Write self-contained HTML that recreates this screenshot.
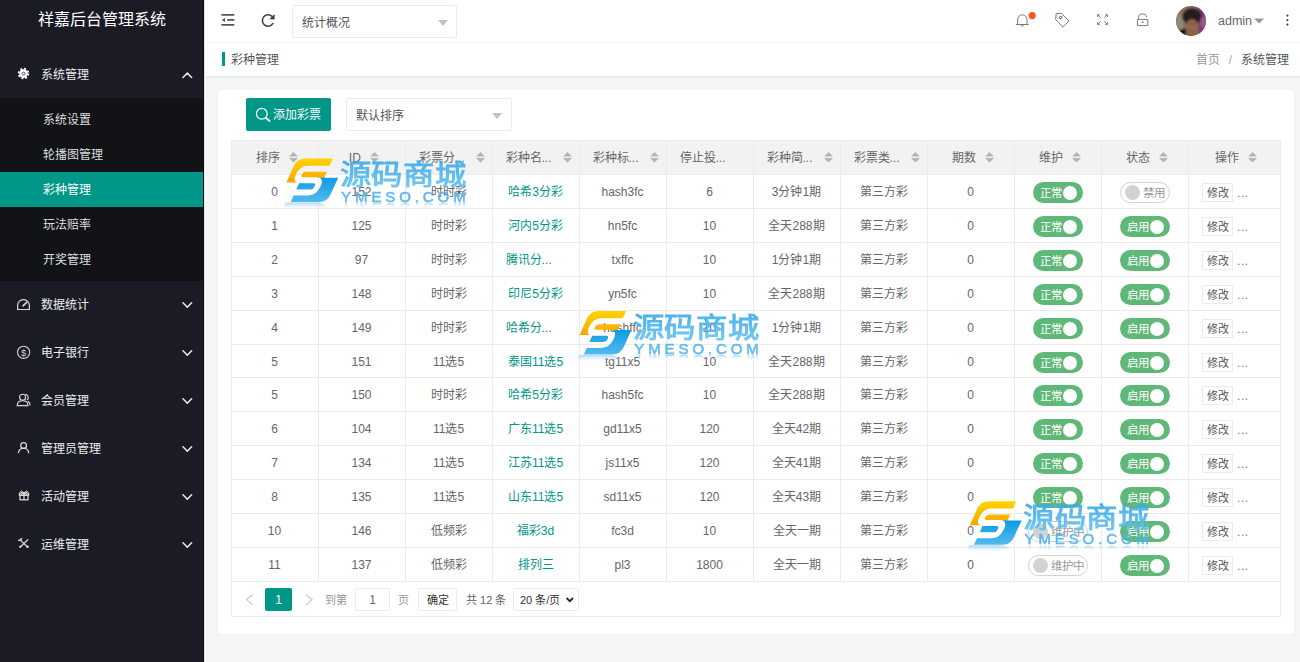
<!DOCTYPE html>
<html lang="zh-CN"><head><meta charset="utf-8">
<style>
*{margin:0;padding:0;box-sizing:border-box}
html,body{width:1300px;height:662px;overflow:hidden;background:#f4f5f7;font-family:"Liberation Sans",sans-serif;font-size:12px;color:#666}
.abs{position:absolute}
svg{position:absolute;overflow:visible}
#side{position:absolute;left:0;top:0;width:204px;height:662px;background:#1b1b25;border-right:1px solid #0b0b12}
#logo{position:absolute;left:0;top:0;width:203px;height:40px;line-height:40px;text-align:center;color:#fff;font-size:16px}
.mi{position:absolute;left:0;width:203px;height:48px;line-height:48px;color:#ebebeb;font-size:12px}
.mi .t{position:absolute;left:41px;top:1px}
.sub{position:absolute;left:0;top:98px;width:203px;height:183px;background:#121317}
.si{position:absolute;left:0;width:203px;height:35px;line-height:35px;color:#ddd;font-size:12px}
.si span{position:absolute;left:43px;top:1px}
.si.on{background:#009688;color:#fff}
#head{position:absolute;left:204px;top:0;width:1096px;height:43px;background:#fff;border-bottom:1px solid #f3f3f3}
#crumb{position:absolute;left:204px;top:43px;width:1096px;height:34px;background:#fff;border-bottom:1px solid #e9eaec;box-shadow:0 1px 1px rgba(0,0,0,0.03)}
#card{position:absolute;left:218px;top:90px;width:1076px;height:544px;background:#fff;border-radius:3px;box-shadow:0 0 1px rgba(0,0,0,0.12)}
.sel{position:absolute;background:#fff;border:1px solid #ebebeb;border-radius:2px;color:#555}
.caret{position:absolute;width:0;height:0;border-left:5px solid transparent;border-right:5px solid transparent;border-top:6px solid #c2c2c2}
#tbl{position:absolute;left:231px;top:140px;width:1050px;height:477px}
.bx{position:absolute;border:1px solid #ebebeb;background:#fff}
.hbg{position:absolute;background:#f2f2f2}
.hl{position:absolute;left:0;width:1050px;height:1px;background:#ebebeb}
.vl{position:absolute;top:0;width:1px;background:#ebebeb}
.th{position:absolute;top:1px;height:33px;line-height:35px;color:#666;font-size:12px;white-space:nowrap}
.thc{position:absolute;top:1px;height:33px;line-height:35px;text-align:center;color:#666;font-size:12px;white-space:nowrap;padding-left:4.6px}
.thc .tx{display:inline-block}
.srt{position:absolute}
.srti{position:relative;display:inline-block;vertical-align:top;margin-left:9px;top:10.7px}
.td{position:absolute;text-align:center;color:#666;font-size:12px;white-space:nowrap}
.td.link{color:#009688}
.sw{position:absolute;height:21px;border-radius:21px;font-size:12px;line-height:21px}
.sw.on{width:49.5px;background:#5fb878;color:#fff}
.sw.on em{position:absolute;left:6.5px;top:1px;font-style:normal;font-size:11.5px}
.sw.on i{position:absolute;right:5.5px;top:3.5px;width:14px;height:14px;border-radius:50%;background:#fff}
.sw.off{width:50px;background:#fff;border:1px solid #d2d2d2;color:#999}
.sw.off.w{width:60px}
.sw.off.w em{left:22px;font-size:11.5px}
.sw.off i{position:absolute;left:4px;top:2px;width:15px;height:15px;border-radius:50%;background:#d2d2d2}
.sw.off em{position:absolute;left:22px;top:0px;font-style:normal;font-size:11.5px}
.edit{position:absolute;width:31px;height:19px;line-height:18px;border:1px solid #ebebeb;background:#fff;color:#555;font-size:11px;text-align:center}
.dots{position:absolute;color:#777;font-size:12px;letter-spacing:0.6px}
.pg{position:absolute;font-size:12px;color:#666;white-space:nowrap}
</style></head><body>
<div id="side">
  <div id="logo">祥嘉后台管理系统</div>
  <div class="mi" style="top:50px"><span class="t">系统管理</span></div>
  <div class="sub">
    <div class="si" style="top:4px"><span>系统设置</span></div>
    <div class="si" style="top:39px"><span>轮播图管理</span></div>
    <div class="si on" style="top:74px"><span>彩种管理</span></div>
    <div class="si" style="top:109px"><span>玩法赔率</span></div>
    <div class="si" style="top:144px"><span>开奖管理</span></div>
  </div>
  <div class="mi" style="top:280px"><span class="t">数据统计</span></div>
  <div class="mi" style="top:328px"><span class="t">电子银行</span></div>
  <div class="mi" style="top:376px"><span class="t">会员管理</span></div>
  <div class="mi" style="top:424px"><span class="t">管理员管理</span></div>
  <div class="mi" style="top:472px"><span class="t">活动管理</span></div>
  <div class="mi" style="top:520px"><span class="t">运维管理</span></div>
  <svg width="204" height="662" style="left:0;top:0">
    <g fill="none" stroke="#e8e8e8" stroke-width="1.6" stroke-linecap="round" stroke-linejoin="round">
      <path d="M183 77.5 L187.3 73 L191.6 77.5"/>
      <path d="M183 302.8 L187.3 307.2 L191.6 302.8"/>
      <path d="M183 350.8 L187.3 355.2 L191.6 350.8"/>
      <path d="M183 398.8 L187.3 403.2 L191.6 398.8"/>
      <path d="M183 446.8 L187.3 451.2 L191.6 446.8"/>
      <path d="M183 494.8 L187.3 499.2 L191.6 494.8"/>
      <path d="M183 542.8 L187.3 547.2 L191.6 542.8"/>
    </g>
    <!-- gear -->
    <g transform="translate(23.5 73.6)">
      <circle r="4.3" fill="#fff"/>
      <circle r="4.9" fill="none" stroke="#fff" stroke-width="1.8" stroke-dasharray="1.92 1.93"/>
      <circle r="1.5" fill="#f4f4f4" stroke="#3a3a48" stroke-width="0.8"/>
    </g>
    <!-- speedometer -->
    <g fill="none" stroke="#d8d8d8" stroke-width="1.2">
      <path d="M17.6 309.5 L17.6 305.5 A5.9 5.9 0 0 1 29.4 305.5 L29.4 309.5 Z"/>
      <path d="M23 305.8 L26.6 302.4" stroke-width="1.6" stroke-linecap="round"/>
    </g>
    <!-- dollar -->
    <g fill="none" stroke="#d0d0d0" stroke-width="1.1">
      <circle cx="23.6" cy="352.3" r="6.1"/>
    </g>
    <text x="23.6" y="355.6" font-size="9.5" font-family="Liberation Sans" text-anchor="middle" fill="#d0d0d0">$</text>
    <!-- users -->
    <g fill="none" stroke="#d8d8d8" stroke-width="1.1">
      <circle cx="22.6" cy="397.2" r="3"/>
      <path d="M17.2 405.6 Q17.2 400.8 22.6 400.8 Q28 400.8 28 405.6 Z"/>
      <path d="M25.3 394.4 A3 3 0 0 1 26.8 400"/>
      <path d="M27.8 401.2 Q30.2 402.4 30.2 405.4"/>
    </g>
    <!-- user -->
    <g fill="none" stroke="#e0e0e0" stroke-width="1.2">
      <circle cx="23.6" cy="445.6" r="2.9"/>
      <path d="M18.4 453.2 A5.2 5 0 0 1 28.8 453.2"/>
    </g>
    <!-- gift -->
    <g fill="none" stroke="#e0e0e0" stroke-width="1.2">
      <rect x="19.4" y="493.2" width="9.2" height="2"/>
      <rect x="20" y="495.2" width="8" height="4.6"/>
      <path d="M24 493.2 L24 499.8"/>
      <path d="M24 493 Q21.2 489.8 20.6 491.6 Q20.6 493 24 493 Q27.4 493 27.4 491.6 Q26.8 489.8 24 493" stroke-width="1"/>
    </g>
    <!-- tools -->
    <g fill="none" stroke="#d8d8d8" stroke-width="1.3" stroke-linecap="round">
      <path d="M20.6 540.4 L27.4 547"/>
      <path d="M27.8 539.6 L20.4 547"/>
      <path d="M18.8 540.2 A2 2 0 0 0 21.4 538.6" stroke-width="1.6"/>
      <circle cx="27.6" cy="546.8" r="1.3" fill="#d8d8d8" stroke="none"/>
      <circle cx="20.2" cy="546.8" r="1.1" fill="#d8d8d8" stroke="none"/>
    </g>
  </svg>
</div>
<div id="head">
  <div class="sel" style="left:88px;top:5px;width:165px;height:33px;line-height:35px;padding-left:9px;font-size:12px">统计概况<i class="caret" style="left:145px;top:14px"></i></div>
</div>
<svg width="1300" height="42" style="left:0;top:0">
  <g fill="none" stroke="#555" stroke-width="1.8">
    <path d="M221.4 14.8 H234.3 M227.2 19.8 H234.3 M221.4 24.8 H234.3"/>
  </g>
  <path d="M221.6 19.9 L225 17.9 L225 21.9 Z" fill="#555"/>
  <g fill="none" stroke="#444" stroke-width="1.6">
    <path d="M273.3 18.2 A5.7 5.7 0 1 0 273.2 23"/>
  </g>
  <path d="M274.6 14 L274.6 19.6 L269.4 19.2 Z" fill="#444"/>
  <g fill="none" stroke="#7a7a7a" stroke-width="1" stroke-linejoin="round">
    <path d="M1017.6 24 L1017.6 20 A4.7 5.2 0 0 1 1027 20 L1027 24 M1015.8 24.5 H1028.8 M1020.6 24.6 L1022.3 26.4 L1024 24.6"/>
    <path d="M1056 16 L1056 13.8 L1061.2 13.2 L1069 21 L1062.8 27 L1055.6 19.6 Z"/>
    <ellipse cx="1060.6" cy="17.4" rx="1.5" ry="1.1" transform="rotate(-20 1060.6 17.4)"/>
    <path d="M1097.6 14.8 L1100.6 17.8 M1097.6 14.8 V17 M1097.6 14.8 H1099.8 M1107.4 14.8 L1104.4 17.8 M1107.4 14.8 V17 M1107.4 14.8 H1105.2 M1097.6 24.4 L1100.6 21.4 M1097.6 24.4 V22.2 M1097.6 24.4 H1099.8 M1107.4 24.4 L1104.4 21.4 M1107.4 24.4 V22.2 M1107.4 24.4 H1105.2"/>
    <rect x="1137.4" y="19.4" width="10.4" height="6.2"/>
    <path d="M1138.6 19.4 L1138.6 17.6 A4 3.4 0 0 1 1146.6 17"/>
  </g>
  <circle cx="1142.6" cy="22.2" r="0.9" fill="#666"/>
  <circle cx="1032.2" cy="15.6" r="3.6" fill="#ff5722"/>
  <path d="M1254 18.6 H1264.2 L1259.1 23.6 Z" fill="#999"/>
  <circle cx="1287.4" cy="15.6" r="1.1" fill="#444"/>
  <circle cx="1287.4" cy="20.1" r="1.1" fill="#444"/>
  <circle cx="1287.4" cy="24.6" r="1.1" fill="#444"/>
</svg>
<svg width="30" height="30" style="left:1176px;top:6px" viewBox="0 0 30 30">
  <defs><clipPath id="av"><circle cx="15" cy="15" r="15"/></clipPath>
  <filter id="bl" x="-20%" y="-20%" width="140%" height="140%"><feGaussianBlur stdDeviation="0.9"/></filter></defs>
  <g clip-path="url(#av)">
   <rect width="30" height="30" fill="#7d7060"/>
   <g filter="url(#bl)">
    <ellipse cx="4" cy="16" rx="4" ry="8" fill="#948a74"/>
    <ellipse cx="7" cy="6" rx="4" ry="3" fill="#9a6a58"/>
    <path d="M21 0 L30 0 L30 30 L23 30 Z" fill="#7f3870"/>
    <ellipse cx="27" cy="16" rx="2.5" ry="6" fill="#9a5a8c"/>
    <ellipse cx="15.8" cy="10.5" rx="9.8" ry="8" fill="#261f1c"/>
    <ellipse cx="16" cy="19.5" rx="5.8" ry="6.2" fill="#94684c"/>
    <ellipse cx="8" cy="28" rx="6" ry="5" fill="#1c1818"/>
    <ellipse cx="15" cy="27" rx="5.5" ry="4.5" fill="#8c6247"/>
    <path d="M11 17.5 L21 17.5" stroke="#5a4a40" stroke-width="0.8"/>
   </g>
  </g>
</svg>
<div class="abs" style="left:1218px;top:13px;line-height:16px;font-size:12.5px;color:#666">admin</div>
<div id="crumb">
  <div class="abs" style="left:18px;top:9px;width:3px;height:14px;background:#009688"></div>
  <div class="abs" style="left:27px;top:0px;line-height:34px;color:#555;font-size:12px">彩种管理</div>
  <div class="abs" style="right:11px;top:0px;line-height:34px;color:#999;font-size:12px">首页<span style="margin:0 9px;color:#aaa">/</span><span style="color:#555">系统管理</span></div>
</div>
<div id="card"></div>
<div class="abs" style="left:204px;top:0;width:1px;height:662px;background:#e4e4e6"></div><div class="abs" style="left:205px;top:0;width:1px;height:662px;background:#fff"></div>
<div class="abs" style="left:246px;top:98px;width:85px;height:33px;background:#009688;border-radius:2px;color:#fff;line-height:35px;font-size:12px;padding-left:27px">添加彩票</div>
<svg width="20" height="20" style="left:0;top:0">
  <g fill="none" stroke="#fff" stroke-width="1.2"><circle cx="261.8" cy="113.8" r="5.4"/><path d="M265.8 117.8 L269.6 121" stroke-width="1.8" stroke-linecap="round"/></g>
</svg>
<div class="sel" style="left:346px;top:98px;width:166px;height:33px;line-height:35px;padding-left:9px;font-size:12px">默认排序<i class="caret" style="left:145px;top:14px"></i></div>
<div id="tbl"><div class="bx" style="left:0;top:0;width:1050px;height:477px"></div><div class="hbg" style="left:1px;top:1px;width:1048px;height:33px"></div><div class="hl" style="top:34px"></div><div class="hl" style="top:68px"></div><div class="hl" style="top:102px"></div><div class="hl" style="top:136px"></div><div class="hl" style="top:170px"></div><div class="hl" style="top:204px"></div><div class="hl" style="top:237px"></div><div class="hl" style="top:271px"></div><div class="hl" style="top:305px"></div><div class="hl" style="top:339px"></div><div class="hl" style="top:373px"></div><div class="hl" style="top:407px"></div><div class="hl" style="top:441px"></div><div class="vl" style="left:87px;height:441px"></div><div class="vl" style="left:174px;height:441px"></div><div class="vl" style="left:261px;height:441px"></div><div class="vl" style="left:348px;height:441px"></div><div class="vl" style="left:435px;height:441px"></div><div class="vl" style="left:522px;height:441px"></div><div class="vl" style="left:609px;height:441px"></div><div class="vl" style="left:696px;height:441px"></div><div class="vl" style="left:783px;height:441px"></div><div class="vl" style="left:870px;height:441px"></div><div class="vl" style="left:957px;height:441px"></div><div class="thc" style="left:0px;width:87px"><span class="tx">排序</span><svg class="srti" width="9" height="11" viewBox="0 0 9 11"><path d="M0 4.6 L4.5 0 L9 4.6 Z M0 5.9 L9 5.9 L4.5 10.5 Z" fill="#b5b5b5"/></svg></div><div class="thc" style="left:87px;width:87px"><span class="tx">ID</span><svg class="srti" width="9" height="11" viewBox="0 0 9 11"><path d="M0 4.6 L4.5 0 L9 4.6 Z M0 5.9 L9 5.9 L4.5 10.5 Z" fill="#b5b5b5"/></svg></div><div class="th" style="left:187.5px">彩票分...</div><svg class="srt" style="left:245px;top:12.2px" width="9" height="11" viewBox="0 0 9 11"><path d="M0 4.6 L4.5 0 L9 4.6 Z M0 5.9 L9 5.9 L4.5 10.5 Z" fill="#b5b5b5"/></svg><div class="th" style="left:274.5px">彩种名...</div><svg class="srt" style="left:332px;top:12.2px" width="9" height="11" viewBox="0 0 9 11"><path d="M0 4.6 L4.5 0 L9 4.6 Z M0 5.9 L9 5.9 L4.5 10.5 Z" fill="#b5b5b5"/></svg><div class="th" style="left:361.5px">彩种标...</div><svg class="srt" style="left:419px;top:12.2px" width="9" height="11" viewBox="0 0 9 11"><path d="M0 4.6 L4.5 0 L9 4.6 Z M0 5.9 L9 5.9 L4.5 10.5 Z" fill="#b5b5b5"/></svg><div class="th" style="left:448.5px">停止投...</div><div class="th" style="left:535.5px">彩种简...</div><svg class="srt" style="left:593px;top:12.2px" width="9" height="11" viewBox="0 0 9 11"><path d="M0 4.6 L4.5 0 L9 4.6 Z M0 5.9 L9 5.9 L4.5 10.5 Z" fill="#b5b5b5"/></svg><div class="th" style="left:622.5px">彩票类...</div><svg class="srt" style="left:680px;top:12.2px" width="9" height="11" viewBox="0 0 9 11"><path d="M0 4.6 L4.5 0 L9 4.6 Z M0 5.9 L9 5.9 L4.5 10.5 Z" fill="#b5b5b5"/></svg><div class="thc" style="left:696px;width:87px"><span class="tx">期数</span><svg class="srti" width="9" height="11" viewBox="0 0 9 11"><path d="M0 4.6 L4.5 0 L9 4.6 Z M0 5.9 L9 5.9 L4.5 10.5 Z" fill="#b5b5b5"/></svg></div><div class="thc" style="left:783px;width:87px"><span class="tx">维护</span><svg class="srti" width="9" height="11" viewBox="0 0 9 11"><path d="M0 4.6 L4.5 0 L9 4.6 Z M0 5.9 L9 5.9 L4.5 10.5 Z" fill="#b5b5b5"/></svg></div><div class="thc" style="left:870px;width:87px"><span class="tx">状态</span><svg class="srti" width="9" height="11" viewBox="0 0 9 11"><path d="M0 4.6 L4.5 0 L9 4.6 Z M0 5.9 L9 5.9 L4.5 10.5 Z" fill="#b5b5b5"/></svg></div><div class="thc" style="left:957px;width:92px"><span class="tx">操作</span><svg class="srti" width="9" height="11" viewBox="0 0 9 11"><path d="M0 4.6 L4.5 0 L9 4.6 Z M0 5.9 L9 5.9 L4.5 10.5 Z" fill="#b5b5b5"/></svg></div><div class="td" style="left:0px;top:36px;width:87px;height:33px;line-height:33px">0</div><div class="td" style="left:87px;top:36px;width:87px;height:33px;line-height:33px">152</div><div class="td" style="left:174px;top:36px;width:87px;height:33px;line-height:33px">时时彩</div><div class="td link" style="left:261px;top:36px;width:87px;height:33px;line-height:33px">哈希3分彩</div><div class="td" style="left:348px;top:36px;width:87px;height:33px;line-height:33px">hash3fc</div><div class="td" style="left:435px;top:36px;width:87px;height:33px;line-height:33px">6</div><div class="td" style="left:522px;top:36px;width:87px;height:33px;line-height:33px">3分钟1期</div><div class="td" style="left:609px;top:36px;width:87px;height:33px;line-height:33px">第三方彩</div><div class="td" style="left:696px;top:36px;width:87px;height:33px;line-height:33px">0</div><div class="sw on" style="left:802px;top:42px"><em>正常</em><i></i></div><div class="sw off" style="left:889px;top:42px"><i></i><em>禁用</em></div><div class="edit" style="left:971px;top:43px">修改</div><div class="dots" style="left:1006px;top:36.5px;height:33px;line-height:33px">...</div><div class="td" style="left:0px;top:70px;width:87px;height:33px;line-height:33px">1</div><div class="td" style="left:87px;top:70px;width:87px;height:33px;line-height:33px">125</div><div class="td" style="left:174px;top:70px;width:87px;height:33px;line-height:33px">时时彩</div><div class="td link" style="left:261px;top:70px;width:87px;height:33px;line-height:33px">河内5分彩</div><div class="td" style="left:348px;top:70px;width:87px;height:33px;line-height:33px">hn5fc</div><div class="td" style="left:435px;top:70px;width:87px;height:33px;line-height:33px">10</div><div class="td" style="left:522px;top:70px;width:87px;height:33px;line-height:33px">全天288期</div><div class="td" style="left:609px;top:70px;width:87px;height:33px;line-height:33px">第三方彩</div><div class="td" style="left:696px;top:70px;width:87px;height:33px;line-height:33px">0</div><div class="sw on" style="left:802px;top:76px"><em>正常</em><i></i></div><div class="sw on" style="left:889px;top:76px"><em>启用</em><i></i></div><div class="edit" style="left:971px;top:77px">修改</div><div class="dots" style="left:1006px;top:70.5px;height:33px;line-height:33px">...</div><div class="td" style="left:0px;top:104px;width:87px;height:33px;line-height:33px">2</div><div class="td" style="left:87px;top:104px;width:87px;height:33px;line-height:33px">97</div><div class="td" style="left:174px;top:104px;width:87px;height:33px;line-height:33px">时时彩</div><div class="td link" style="left:274.5px;top:104px;height:33px;line-height:33px">腾讯分...</div><div class="td" style="left:348px;top:104px;width:87px;height:33px;line-height:33px">txffc</div><div class="td" style="left:435px;top:104px;width:87px;height:33px;line-height:33px">10</div><div class="td" style="left:522px;top:104px;width:87px;height:33px;line-height:33px">1分钟1期</div><div class="td" style="left:609px;top:104px;width:87px;height:33px;line-height:33px">第三方彩</div><div class="td" style="left:696px;top:104px;width:87px;height:33px;line-height:33px">0</div><div class="sw on" style="left:802px;top:110px"><em>正常</em><i></i></div><div class="sw on" style="left:889px;top:110px"><em>启用</em><i></i></div><div class="edit" style="left:971px;top:111px">修改</div><div class="dots" style="left:1006px;top:104.5px;height:33px;line-height:33px">...</div><div class="td" style="left:0px;top:138px;width:87px;height:33px;line-height:33px">3</div><div class="td" style="left:87px;top:138px;width:87px;height:33px;line-height:33px">148</div><div class="td" style="left:174px;top:138px;width:87px;height:33px;line-height:33px">时时彩</div><div class="td link" style="left:261px;top:138px;width:87px;height:33px;line-height:33px">印尼5分彩</div><div class="td" style="left:348px;top:138px;width:87px;height:33px;line-height:33px">yn5fc</div><div class="td" style="left:435px;top:138px;width:87px;height:33px;line-height:33px">10</div><div class="td" style="left:522px;top:138px;width:87px;height:33px;line-height:33px">全天288期</div><div class="td" style="left:609px;top:138px;width:87px;height:33px;line-height:33px">第三方彩</div><div class="td" style="left:696px;top:138px;width:87px;height:33px;line-height:33px">0</div><div class="sw on" style="left:802px;top:144px"><em>正常</em><i></i></div><div class="sw on" style="left:889px;top:144px"><em>启用</em><i></i></div><div class="edit" style="left:971px;top:145px">修改</div><div class="dots" style="left:1006px;top:138.5px;height:33px;line-height:33px">...</div><div class="td" style="left:0px;top:172px;width:87px;height:33px;line-height:33px">4</div><div class="td" style="left:87px;top:172px;width:87px;height:33px;line-height:33px">149</div><div class="td" style="left:174px;top:172px;width:87px;height:33px;line-height:33px">时时彩</div><div class="td link" style="left:274.5px;top:172px;height:33px;line-height:33px">哈希分...</div><div class="td" style="left:348px;top:172px;width:87px;height:33px;line-height:33px">hashffc</div><div class="td" style="left:435px;top:172px;width:87px;height:33px;line-height:33px">10</div><div class="td" style="left:522px;top:172px;width:87px;height:33px;line-height:33px">1分钟1期</div><div class="td" style="left:609px;top:172px;width:87px;height:33px;line-height:33px">第三方彩</div><div class="td" style="left:696px;top:172px;width:87px;height:33px;line-height:33px">0</div><div class="sw on" style="left:802px;top:178px"><em>正常</em><i></i></div><div class="sw on" style="left:889px;top:178px"><em>启用</em><i></i></div><div class="edit" style="left:971px;top:179px">修改</div><div class="dots" style="left:1006px;top:172.5px;height:33px;line-height:33px">...</div><div class="td" style="left:0px;top:206px;width:87px;height:32px;line-height:32px">5</div><div class="td" style="left:87px;top:206px;width:87px;height:32px;line-height:32px">151</div><div class="td" style="left:174px;top:206px;width:87px;height:32px;line-height:32px">11选5</div><div class="td link" style="left:261px;top:206px;width:87px;height:32px;line-height:32px">泰国11选5</div><div class="td" style="left:348px;top:206px;width:87px;height:32px;line-height:32px">tg11x5</div><div class="td" style="left:435px;top:206px;width:87px;height:32px;line-height:32px">10</div><div class="td" style="left:522px;top:206px;width:87px;height:32px;line-height:32px">全天288期</div><div class="td" style="left:609px;top:206px;width:87px;height:32px;line-height:32px">第三方彩</div><div class="td" style="left:696px;top:206px;width:87px;height:32px;line-height:32px">0</div><div class="sw on" style="left:802px;top:212px"><em>正常</em><i></i></div><div class="sw on" style="left:889px;top:212px"><em>启用</em><i></i></div><div class="edit" style="left:971px;top:213px">修改</div><div class="dots" style="left:1006px;top:206.5px;height:32px;line-height:32px">...</div><div class="td" style="left:0px;top:239px;width:87px;height:33px;line-height:33px">5</div><div class="td" style="left:87px;top:239px;width:87px;height:33px;line-height:33px">150</div><div class="td" style="left:174px;top:239px;width:87px;height:33px;line-height:33px">时时彩</div><div class="td link" style="left:261px;top:239px;width:87px;height:33px;line-height:33px">哈希5分彩</div><div class="td" style="left:348px;top:239px;width:87px;height:33px;line-height:33px">hash5fc</div><div class="td" style="left:435px;top:239px;width:87px;height:33px;line-height:33px">10</div><div class="td" style="left:522px;top:239px;width:87px;height:33px;line-height:33px">全天288期</div><div class="td" style="left:609px;top:239px;width:87px;height:33px;line-height:33px">第三方彩</div><div class="td" style="left:696px;top:239px;width:87px;height:33px;line-height:33px">0</div><div class="sw on" style="left:802px;top:245px"><em>正常</em><i></i></div><div class="sw on" style="left:889px;top:245px"><em>启用</em><i></i></div><div class="edit" style="left:971px;top:246px">修改</div><div class="dots" style="left:1006px;top:239.5px;height:33px;line-height:33px">...</div><div class="td" style="left:0px;top:273px;width:87px;height:33px;line-height:33px">6</div><div class="td" style="left:87px;top:273px;width:87px;height:33px;line-height:33px">104</div><div class="td" style="left:174px;top:273px;width:87px;height:33px;line-height:33px">11选5</div><div class="td link" style="left:261px;top:273px;width:87px;height:33px;line-height:33px">广东11选5</div><div class="td" style="left:348px;top:273px;width:87px;height:33px;line-height:33px">gd11x5</div><div class="td" style="left:435px;top:273px;width:87px;height:33px;line-height:33px">120</div><div class="td" style="left:522px;top:273px;width:87px;height:33px;line-height:33px">全天42期</div><div class="td" style="left:609px;top:273px;width:87px;height:33px;line-height:33px">第三方彩</div><div class="td" style="left:696px;top:273px;width:87px;height:33px;line-height:33px">0</div><div class="sw on" style="left:802px;top:279px"><em>正常</em><i></i></div><div class="sw on" style="left:889px;top:279px"><em>启用</em><i></i></div><div class="edit" style="left:971px;top:280px">修改</div><div class="dots" style="left:1006px;top:273.5px;height:33px;line-height:33px">...</div><div class="td" style="left:0px;top:307px;width:87px;height:33px;line-height:33px">7</div><div class="td" style="left:87px;top:307px;width:87px;height:33px;line-height:33px">134</div><div class="td" style="left:174px;top:307px;width:87px;height:33px;line-height:33px">11选5</div><div class="td link" style="left:261px;top:307px;width:87px;height:33px;line-height:33px">江苏11选5</div><div class="td" style="left:348px;top:307px;width:87px;height:33px;line-height:33px">js11x5</div><div class="td" style="left:435px;top:307px;width:87px;height:33px;line-height:33px">120</div><div class="td" style="left:522px;top:307px;width:87px;height:33px;line-height:33px">全天41期</div><div class="td" style="left:609px;top:307px;width:87px;height:33px;line-height:33px">第三方彩</div><div class="td" style="left:696px;top:307px;width:87px;height:33px;line-height:33px">0</div><div class="sw on" style="left:802px;top:313px"><em>正常</em><i></i></div><div class="sw on" style="left:889px;top:313px"><em>启用</em><i></i></div><div class="edit" style="left:971px;top:314px">修改</div><div class="dots" style="left:1006px;top:307.5px;height:33px;line-height:33px">...</div><div class="td" style="left:0px;top:341px;width:87px;height:33px;line-height:33px">8</div><div class="td" style="left:87px;top:341px;width:87px;height:33px;line-height:33px">135</div><div class="td" style="left:174px;top:341px;width:87px;height:33px;line-height:33px">11选5</div><div class="td link" style="left:261px;top:341px;width:87px;height:33px;line-height:33px">山东11选5</div><div class="td" style="left:348px;top:341px;width:87px;height:33px;line-height:33px">sd11x5</div><div class="td" style="left:435px;top:341px;width:87px;height:33px;line-height:33px">120</div><div class="td" style="left:522px;top:341px;width:87px;height:33px;line-height:33px">全天43期</div><div class="td" style="left:609px;top:341px;width:87px;height:33px;line-height:33px">第三方彩</div><div class="td" style="left:696px;top:341px;width:87px;height:33px;line-height:33px">0</div><div class="sw on" style="left:802px;top:347px"><em>正常</em><i></i></div><div class="sw on" style="left:889px;top:347px"><em>启用</em><i></i></div><div class="edit" style="left:971px;top:348px">修改</div><div class="dots" style="left:1006px;top:341.5px;height:33px;line-height:33px">...</div><div class="td" style="left:0px;top:375px;width:87px;height:33px;line-height:33px">10</div><div class="td" style="left:87px;top:375px;width:87px;height:33px;line-height:33px">146</div><div class="td" style="left:174px;top:375px;width:87px;height:33px;line-height:33px">低频彩</div><div class="td link" style="left:261px;top:375px;width:87px;height:33px;line-height:33px">福彩3d</div><div class="td" style="left:348px;top:375px;width:87px;height:33px;line-height:33px">fc3d</div><div class="td" style="left:435px;top:375px;width:87px;height:33px;line-height:33px">10</div><div class="td" style="left:522px;top:375px;width:87px;height:33px;line-height:33px">全天一期</div><div class="td" style="left:609px;top:375px;width:87px;height:33px;line-height:33px">第三方彩</div><div class="td" style="left:696px;top:375px;width:87px;height:33px;line-height:33px">0</div><div class="sw off w" style="left:797px;top:381px"><i></i><em>维护中</em></div><div class="sw on" style="left:889px;top:381px"><em>启用</em><i></i></div><div class="edit" style="left:971px;top:382px">修改</div><div class="dots" style="left:1006px;top:375.5px;height:33px;line-height:33px">...</div><div class="td" style="left:0px;top:409px;width:87px;height:33px;line-height:33px">11</div><div class="td" style="left:87px;top:409px;width:87px;height:33px;line-height:33px">137</div><div class="td" style="left:174px;top:409px;width:87px;height:33px;line-height:33px">低频彩</div><div class="td link" style="left:261px;top:409px;width:87px;height:33px;line-height:33px">排列三</div><div class="td" style="left:348px;top:409px;width:87px;height:33px;line-height:33px">pl3</div><div class="td" style="left:435px;top:409px;width:87px;height:33px;line-height:33px">1800</div><div class="td" style="left:522px;top:409px;width:87px;height:33px;line-height:33px">全天一期</div><div class="td" style="left:609px;top:409px;width:87px;height:33px;line-height:33px">第三方彩</div><div class="td" style="left:696px;top:409px;width:87px;height:33px;line-height:33px">0</div><div class="sw off w" style="left:797px;top:415px"><i></i><em>维护中</em></div><div class="sw on" style="left:889px;top:415px"><em>启用</em><i></i></div><div class="edit" style="left:971px;top:416px">修改</div><div class="dots" style="left:1006px;top:409.5px;height:33px;line-height:33px">...</div></div>
<div class="pg" style="left:0;top:0">
 <svg width="10" height="10" style="left:0;top:0"><g fill="none" stroke="#c2c2c2" stroke-width="1.1"><path d="M252.6 594.6 L246.6 599.6 L252.6 604.8"/><path d="M306 594.6 L312 599.6 L306 604.8"/></g></svg>
 <div class="abs" style="left:265px;top:588px;width:27px;height:23px;background:#009688;border-radius:2px;color:#fff;text-align:center;line-height:25px">1</div>
 <div class="abs" style="left:325px;top:589px;line-height:23px;color:#999;font-size:11px">到第</div>
 <div class="abs" style="left:355px;top:588px;width:35px;height:23px;border:1px solid #ebebeb;border-radius:2px;text-align:center;line-height:23px;color:#666">1</div>
 <div class="abs" style="left:398px;top:589px;line-height:23px;color:#999;font-size:11px">页</div>
 <div class="abs" style="left:418px;top:588px;width:39px;height:23px;border:1px solid #ebebeb;border-radius:2px;text-align:center;line-height:23px;color:#333;font-size:11px">确定</div>
 <div class="abs" style="left:466px;top:589px;line-height:23px;color:#666;font-size:11px">共 12 条</div>
 <div class="abs" style="left:513px;top:588px;width:66px;height:23px;border:1px solid #ebebeb;border-radius:2px;line-height:22px;color:#333;padding-left:6px;font-size:11px">20 条/页</div>
 <svg width="10" height="10" style="left:0;top:0"><path d="M566.6 598 L569.8 601.2 L573 598" fill="none" stroke="#222" stroke-width="1.8"/></svg>
</div>
<svg width="0" height="0" style="left:0;top:0">
 <defs>
  <linearGradient id="gy" x1="0" y1="0" x2="0" y2="1"><stop offset="0" stop-color="#ffd400"/><stop offset="1" stop-color="#f6a500"/></linearGradient>
  <linearGradient id="gb" x1="0" y1="0" x2="0" y2="1"><stop offset="0" stop-color="#0c9ce2"/><stop offset="1" stop-color="#55b9ee"/></linearGradient>
  <linearGradient id="gr" gradientUnits="userSpaceOnUse" x1="0" y1="52" x2="0" y2="59"><stop offset="0" stop-color="#7cc8f2" stop-opacity="0.75"/><stop offset="1" stop-color="#cfeafa" stop-opacity="0"/></linearGradient>
  <linearGradient id="gr2" gradientUnits="userSpaceOnUse" x1="0" y1="-51" x2="0" y2="-58"><stop offset="0" stop-color="#6cc0f0" stop-opacity="0.9"/><stop offset="1" stop-color="#cfeafa" stop-opacity="0"/></linearGradient>
  <linearGradient id="gt" gradientUnits="userSpaceOnUse" x1="0" y1="-25" x2="0" y2="2"><stop offset="0" stop-color="#38a9e8"/><stop offset="1" stop-color="#66c2f0"/></linearGradient>
  <clipPath id="cs"><path d="M-2.4 32.6 L-2.4 16.6 Q-2.4 8.6 5.6 8.6 L33.3 8.6 L33.3 27.7 L47.2 27.7 L47.2 44.1 Q47.2 52.1 39.2 52.1 L10.6 52.1 L10.6 32.6 Z"/></clipPath>
  <mask id="ms" maskUnits="userSpaceOnUse" x="-20" y="0" width="100" height="60"><rect x="-20" y="0" width="100" height="60" fill="#fff"/><path d="M45 18.85 L12 18.85 Q6.45 18.85 6.45 24.6 Q6.45 30.35 12 30.35 L25 30.35 Q30.5 30.35 30.5 36.5 Q30.5 42.6 25 42.6 L-5 42.6" fill="none" stroke="#000" stroke-width="6"/></mask>
  <clipPath id="cr"><rect x="-10" y="51.6" width="220" height="8"/></clipPath>
 </defs>
</svg>
<svg width="1300" height="662" style="left:0;top:0">
 <g transform="translate(280 150)">
   <g transform="matrix(1 0 -0.45 1 23.45 0)" mask="url(#ms)">
    <path d="M-2.4 32.6 L-2.4 16.6 Q-2.4 8.6 5.6 8.6 L33.3 8.6 L33.3 32.6 Z" fill="url(#gy)"/>
    <path d="M10.6 27.7 L47.2 27.7 L47.2 44.1 Q47.2 52.1 39.2 52.1 L10.6 52.1 Z" fill="url(#gb)"/>
   </g>
   <g clip-path="url(#cr)">
    <path d="M5.6 52.6 L37 52.6 Q45 52.6 46.5 58.6 L3 58.6 Z" fill="url(#gr)"/>
    <text transform="scale(1 -1)" x="61.1" y="-53.2" font-family="Liberation Sans" font-size="15" letter-spacing="3.9" fill="url(#gr2)" stroke="url(#gr2)" stroke-width="0.4">YMESO.COM</text>
   </g>
   <g transform="translate(59.5 35.4) scale(1.1 1)"><text x="0" y="0" font-family="Liberation Sans" font-weight="700" font-size="28.5" letter-spacing="0.3" fill="url(#gt)" opacity="0.9">源码商城</text></g>
   <text x="61.1" y="51.6" font-family="Liberation Sans" font-size="15" letter-spacing="3.9" fill="#4fb4ea" stroke="#4fb4ea" stroke-width="0.55" opacity="0.9">YMESO.COM</text>
 </g>
 <g transform="translate(573.2 302.3)">
   <g transform="matrix(1 0 -0.45 1 23.45 0)" mask="url(#ms)">
    <path d="M-2.4 32.6 L-2.4 16.6 Q-2.4 8.6 5.6 8.6 L33.3 8.6 L33.3 32.6 Z" fill="url(#gy)"/>
    <path d="M10.6 27.7 L47.2 27.7 L47.2 44.1 Q47.2 52.1 39.2 52.1 L10.6 52.1 Z" fill="url(#gb)"/>
   </g>
   <g clip-path="url(#cr)">
    <path d="M5.6 52.6 L37 52.6 Q45 52.6 46.5 58.6 L3 58.6 Z" fill="url(#gr)"/>
    <text transform="scale(1 -1)" x="61.1" y="-53.2" font-family="Liberation Sans" font-size="15" letter-spacing="3.9" fill="url(#gr2)" stroke="url(#gr2)" stroke-width="0.4">YMESO.COM</text>
   </g>
   <g transform="translate(59.5 35.4) scale(1.1 1)"><text x="0" y="0" font-family="Liberation Sans" font-weight="700" font-size="28.5" letter-spacing="0.3" fill="url(#gt)" opacity="0.9">源码商城</text></g>
   <text x="61.1" y="51.6" font-family="Liberation Sans" font-size="15" letter-spacing="3.9" fill="#4fb4ea" stroke="#4fb4ea" stroke-width="0.55" opacity="0.9">YMESO.COM</text>
 </g>
 <g transform="translate(963.4 492.7)">
   <g transform="matrix(1 0 -0.45 1 23.45 0)" mask="url(#ms)">
    <path d="M-2.4 32.6 L-2.4 16.6 Q-2.4 8.6 5.6 8.6 L33.3 8.6 L33.3 32.6 Z" fill="url(#gy)"/>
    <path d="M10.6 27.7 L47.2 27.7 L47.2 44.1 Q47.2 52.1 39.2 52.1 L10.6 52.1 Z" fill="url(#gb)"/>
   </g>
   <g clip-path="url(#cr)">
    <path d="M5.6 52.6 L37 52.6 Q45 52.6 46.5 58.6 L3 58.6 Z" fill="url(#gr)"/>
    <text transform="scale(1 -1)" x="61.1" y="-53.2" font-family="Liberation Sans" font-size="15" letter-spacing="3.9" fill="url(#gr2)" stroke="url(#gr2)" stroke-width="0.4">YMESO.COM</text>
   </g>
   <g transform="translate(59.5 35.4) scale(1.1 1)"><text x="0" y="0" font-family="Liberation Sans" font-weight="700" font-size="28.5" letter-spacing="0.3" fill="url(#gt)" opacity="0.9">源码商城</text></g>
   <text x="61.1" y="51.6" font-family="Liberation Sans" font-size="15" letter-spacing="3.9" fill="#4fb4ea" stroke="#4fb4ea" stroke-width="0.55" opacity="0.9">YMESO.COM</text>
 </g>
</svg>

</body></html>
